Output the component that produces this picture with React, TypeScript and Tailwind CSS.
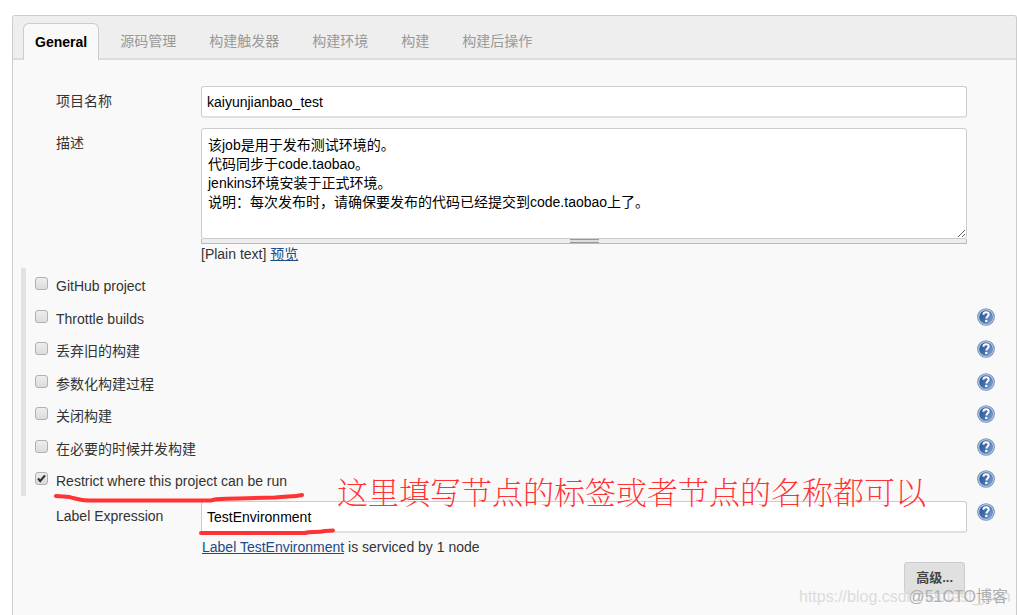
const tabs = ['源码管理', '构建触发器', '构建环境', '构建', '构建后操作']

const options = [
  { id: 'github', label: 'GitHub project', help: false, checked: false },
  { id: 'throttle', label: 'Throttle builds', help: true, checked: false },
  { id: 'discard', label: '丢弃旧的构建', help: true, checked: false },
  { id: 'params', label: '参数化构建过程', help: true, checked: false },
  { id: 'disable', label: '关闭构建', help: true, checked: false },
  { id: 'concurrent', label: '在必要的时候并发构建', help: true, checked: false },
  { id: 'restrict', label: 'Restrict where this project can be run', help: true, checked: true },
]

const description = `该job是用于发布测试环境的。
代码同步于code.taobao。
jenkins环境安装于正式环境。
说明：每次发布时，请确保要发布的代码已经提交到code.taobao上了。`

const inputClass =
  'block h-8 w-full rounded-[3px] border border-b-2 border-[#ccc] border-b-[#e0e0e0] bg-white px-[5px] text-black outline-none'

function HelpButton({ topic }: { topic: string }) {
  return (
    <button type="button" aria-label={`Help for ${topic}`} className="block size-[18px]">
      <svg viewBox="0 0 18 18" className="size-[18px]" aria-hidden="true">
        <defs>
          <linearGradient id="help-fill" x1="0" y1="0.2" x2="1" y2="0.8">
            <stop offset="0" stopColor="#2a5595" />
            <stop offset="0.5" stopColor="#4470ae" />
            <stop offset="1" stopColor="#86a8d2" />
          </linearGradient>
        </defs>
        <circle cx="9" cy="9" r="8.3" fill="#c3d3e8" stroke="#7292bf" strokeWidth="1.1" />
        <circle cx="9" cy="9" r="6.6" fill="url(#help-fill)" stroke="#4a72aa" strokeWidth="0.5" />
        <path
          d="M6.4 6.7C6.4 5 7.5 4.3 9.1 4.3C10.8 4.3 11.7 5.2 11.7 6.5C11.7 8.2 9.4 8.4 9.4 10.5"
          fill="none"
          stroke="#fff"
          strokeWidth="2"
        />
        <circle cx="9.3" cy="12.9" r="1.2" fill="#fff" />
      </svg>
    </button>
  )
}

function Option({ id, label, help, checked }: (typeof options)[number]) {
  return (
    <div className="flex flex-1 items-start pl-[9px]">
      <span className="relative mt-[9px] size-[13px] shrink-0">
        <input
          id={id}
          type="checkbox"
          defaultChecked={checked}
          className="peer block size-[13px] appearance-none rounded-[3px] border border-[#b0b0b0] bg-linear-to-b from-[#ededed] to-[#dcdcdc]"
        />
        <svg
          viewBox="0 0 13 13"
          className="pointer-events-none absolute inset-0 hidden size-[13px] peer-checked:block"
          aria-hidden="true"
        >
          <path d="M3 6.6L5.2 9L10 3.4" fill="none" stroke="#333" strokeWidth="2.2" />
        </svg>
      </span>
      <label htmlFor={id} className="mt-2 ml-2 flex-1 leading-5">
        {label}
      </label>
      {help && (
        <div className="mt-[7px] w-[39px]">
          <HelpButton topic={label} />
        </div>
      )}
    </div>
  )
}

export default function App() {
  return (
    <div className="flex min-h-screen flex-col overflow-hidden bg-white pt-[15px] pl-3 font-['Liberation_Sans','Noto_Sans_CJK_SC',sans-serif] text-[14px] text-[#333]">
      <main className="relative flex flex-1 flex-col rounded-t-[3px] border border-b-0 border-[#ccc] bg-[#f9f9f9]">
        <nav className="flex h-11 items-end gap-2.5 rounded-t-[3px] border-b-2 border-[#dcdcdc] bg-[#eee] pl-2.5">
          <button
            type="button"
            className="-mb-0.5 h-[37px] rounded-t-md border border-b-0 border-[#ccc] bg-[#f9f9f9] px-[11px] font-bold text-black"
          >
            General
          </button>
          {tabs.map((tab) => (
            <button key={tab} type="button" className="h-[33px] px-[11px] text-[#999] not-last:mr-px">
              {tab}
            </button>
          ))}
        </nav>

        <form className="flex flex-col pt-[26px]">
          <div className="grid grid-cols-[145px_1fr_49px] pl-[43px]">
            <label htmlFor="name" className="pt-[5px] leading-5">
              项目名称
            </label>
            <input id="name" defaultValue="kaiyunjianbao_test" className={inputClass} />
          </div>

          <div className="mt-2.5 grid grid-cols-[145px_1fr_49px] pl-[43px]">
            <label htmlFor="description" className="pt-[5px] leading-5">
              描述
            </label>
            <div>
              <textarea
                id="description"
                defaultValue={description}
                className="block h-[111px] w-full resize rounded-[3px] border border-[#ccc] bg-white px-1.5 py-[7px] leading-[19px] text-black outline-none"
              />
              <div className="flex h-[5px] flex-col items-center border border-t-0 border-[#bbb] bg-[#eee]">
                <div className="h-1 w-[29px] border-y border-[#999] bg-[#ddd]" />
              </div>
              <p className="leading-5">
                [Plain text]{' '}
                <a href="#preview" className="text-[#204a87] underline">
                  预览
                </a>
              </p>
            </div>
          </div>

          {/* Optional blocks */}
          <div className="mt-1 ml-2 flex h-[228px] flex-col border-l-[5px] border-[#e2e2e2]">
            {options.map((option) => (
              <Option key={option.id} {...option} />
            ))}
          </div>

          <div className="relative mt-[5px] grid grid-cols-[145px_1fr_49px] pl-[43px]">
            <label htmlFor="label-expression" className="pt-[5px] leading-5">
              Label Expression
            </label>
            <div>
              <input id="label-expression" defaultValue="TestEnvironment" className={inputClass} />
              <p className="mt-1 pl-px leading-5">
                <a href="#label" className="text-[#204a87] underline">
                  Label TestEnvironment
                </a>{' '}
                is serviced by 1 node
              </p>
            </div>
            <div className="pt-0.5 pl-2.5">
              <HelpButton topic="Label Expression" />
            </div>

            {/* Red pen marks */}
            <svg
              viewBox="0 0 290 50"
              className="pointer-events-none absolute -top-2.5 left-10 h-[50px] w-[290px]"
              fill="none"
              stroke="#f33"
              strokeWidth="4"
              strokeLinecap="round"
              strokeLinejoin="round"
              aria-hidden="true"
            >
              <path d="M3 5C11 6 15 5 20 7C28 9 30 9.500 41 9.500H158C162 7 170 8 185 7.500L222 6.500C234 5 240 6 249 4" />
              <path d="M148 42H252C258 40 264 42 272 40L280 39.500" />
            </svg>
            <p className="pointer-events-none absolute -top-7 left-[324px] font-['Noto_Serif_CJK_SC','Noto_Sans_CJK_SC',serif] text-[31px] leading-9 font-extralight whitespace-nowrap text-[#f33]">
              这里填写节点的标签或者节点的名称都可以
            </p>
          </div>

          <div className="mt-[5px] flex justify-end pr-[51px]">
            <button
              type="button"
              className="h-8 rounded-[3px] border border-[#ccc] bg-[#e0e0e0] px-[11px] text-[13px] font-bold text-[#444]"
            >
              高级...
            </button>
          </div>
        </form>

        {/* Watermarks */}
        <p className="pointer-events-none absolute right-2 bottom-2 w-[209px] text-[16px] leading-5 whitespace-nowrap text-[#dcdcdc]">
          https://blog.csdn.net/test_json
        </p>
        <p className="pointer-events-none absolute right-2 bottom-2 text-[16px] leading-5 text-[#b0b0b0]">
          @51CTO博客
        </p>
      </main>
    </div>
  )
}
